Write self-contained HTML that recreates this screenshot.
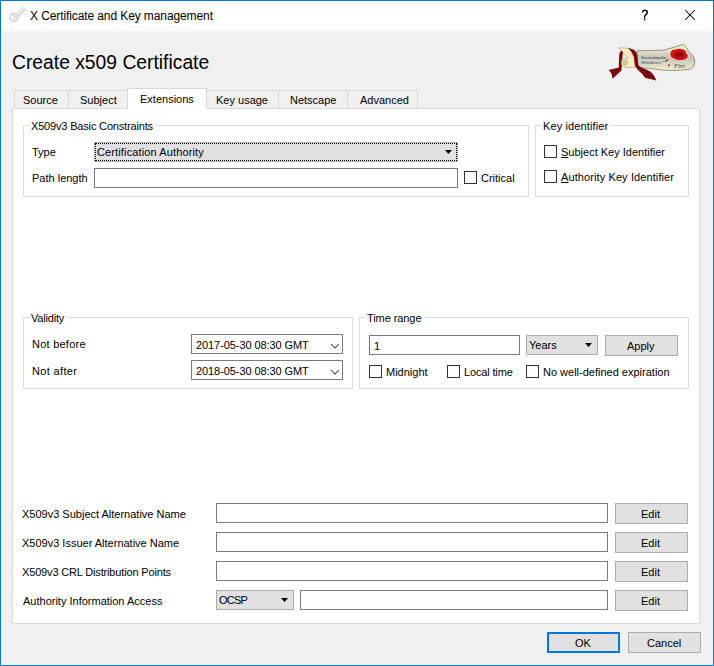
<!DOCTYPE html>
<html><head><meta charset="utf-8">
<style>
*{margin:0;padding:0;box-sizing:border-box}
html,body{width:714px;height:666px;overflow:hidden;background:#f0f0f0}
body{position:relative;font-family:"Liberation Sans",sans-serif;font-size:11px;line-height:13px;color:#000}
.a{position:absolute}
.t{position:absolute;white-space:nowrap;font-size:11px;line-height:13px}
.win{position:absolute;left:0;top:0;width:714px;height:666px;border:1px solid #0078d7;background:#f0f0f0}
.titlebar{position:absolute;left:1px;top:1px;width:712px;height:30px;background:#fff}
.tab{position:absolute;top:90px;height:18px;border:1px solid #d9d9d9;border-bottom:none;background:#f0f0f0}
.tab.sel{top:88px;height:21px;background:#fff;z-index:2}
.pane{position:absolute;left:12px;top:108px;width:688px;height:516px;background:#fff;border:1px solid #d9d9d9}
.gb{position:absolute;border:1px solid #dcdcdc}
.gbt{position:absolute;white-space:nowrap;background:#fff;padding:0 3px 0 1px;font-size:11px;line-height:13px}
.inp{position:absolute;background:#fff;border:1px solid #7a7a7a}
.cmb{position:absolute;background:#e1e1e1;border:1px solid #adadad}
.btn{position:absolute;background:#e1e1e1;border:1px solid #adadad}
.cb{position:absolute;width:13px;height:13px;border:1px solid #333;background:#fff}
.arr{position:absolute;width:0;height:0;border-left:3.5px solid transparent;border-right:3.5px solid transparent;border-top:4px solid #000}
</style></head><body>
<div class="win"></div>
<div class="titlebar"></div>
<!-- key icon -->
<svg class="a" style="left:0;top:0" width="30" height="30" viewBox="0 0 30 30">
  <path d="M16.3 12.6 L21.5 7.3 Q23 6.3 24.6 7.6 Q25.6 8.8 24.8 10.1 L18.3 16.6 Z" fill="#e9e9e9"/>
  <line x1="18.4" y1="16.4" x2="24.8" y2="10.1" stroke="#808080" stroke-width="0.8" stroke-dasharray="1 0.6"/>
  <circle cx="13.9" cy="17.5" r="4.5" fill="#e6e6e6" stroke="#c2c2c2" stroke-width="0.7"/>
  <circle cx="11.8" cy="17.4" r="1.05" fill="#ffffff"/>
</svg>
<div class="t" style="left:30px;top:9px;font-size:12px;line-height:14px;letter-spacing:-0.1px">X Certificate and Key management</div>
<!-- ? and X -->
<svg class="a" style="left:640px;top:8px" width="10" height="14" viewBox="0 0 10 14">
  <path d="M2.6 3.9 C2.9 2.8 3.9 2.3 4.9 2.3 C6.4 2.3 7.3 3.2 7.3 4.4 C7.3 5.8 6.1 6.4 5.3 7.3 C4.7 8 4.5 8.6 4.5 9.4" fill="none" stroke="#000" stroke-width="1.45" stroke-linecap="round"/>
  <circle cx="4.7" cy="11.4" r="0.95" fill="#000"/>
</svg>
<svg class="a" style="left:684px;top:9px" width="12" height="12" viewBox="0 0 12 12">
  <line x1="1.5" y1="1.5" x2="10.5" y2="10.5" stroke="#000" stroke-width="1.05" stroke-linecap="round"/>
  <line x1="10.5" y1="1.5" x2="1.5" y2="10.5" stroke="#000" stroke-width="1.05" stroke-linecap="round"/>
</svg>

<div class="t" style="left:12px;top:52px;font-size:19.3px;line-height:22px">Create x509 Certificate</div>

<!-- logo -->
<svg class="a" style="left:600px;top:40px" width="100" height="44" viewBox="0 0 100 44">
  <defs>
    <linearGradient id="pg" x1="0" y1="0" x2="0" y2="1">
      <stop offset="0" stop-color="#f4f1c4"/>
      <stop offset="0.22" stop-color="#e6e4c6"/>
      <stop offset="0.5" stop-color="#c6c6ba"/>
      <stop offset="0.78" stop-color="#d8d8c4"/>
      <stop offset="1" stop-color="#f6f3c8"/>
    </linearGradient>
  </defs>
  <path d="M37 10.8 C50 10.5 60 10.3 64 10 C70 8.5 78 6 83.5 4.3 L84.5 5.4 C86 8 90 12.5 93.2 16.2 C95 19 95.2 23 93.7 25.9 C92.5 27.8 91 29 90 29.2 C85 30 78 30.3 74.8 30.3 L64 30.3 C55 29 45 27.6 37 27.5 Z" fill="url(#pg)" stroke="#4a4a44" stroke-width="0.55"/>
  <path d="M21 10.8 C22.5 10.2 23.6 10.2 24.4 10.4 C23.4 12 22.8 13.5 22.6 15 C22.3 18 22.2 21 22 24 C21.8 26 21.6 28 21.4 30.6 C18.5 33.5 15.5 36 12.4 38.8 C12.2 36.5 11.8 34.6 11.2 33.2 C10.4 32 9.6 31 8.6 30.1 C12 29.3 15.5 28.3 18.8 27.6 C18.9 23 19 18 19.3 14.5 C19.6 12.8 20.2 11.5 21 10.8 Z" fill="#7a0a10"/>
  <path d="M19 7.7 L30 8.3 L37 27.2 L26 27.6 C23 27.2 21.2 25.5 21.2 22.5 C21.2 20 23 18.3 25.5 18.3 L28.3 18.8 Z" fill="#f5efbf" stroke="#8a8060" stroke-width="0.4"/>
  <circle cx="25" cy="22.6" r="2.3" fill="none" stroke="#9a8a5a" stroke-width="0.7"/>
  <circle cx="25.2" cy="22.8" r="0.8" fill="#9a8a5a"/>
  <path d="M27.4 8.3 C29 8.3 31 8.6 32.8 9.2 C34 9.8 35 10.6 35.8 11.6 C36.8 13.5 37.4 15.5 37.6 17 C37.8 20 38 23 38.7 25.6 C41 27.5 44 28.8 46.8 29.7 C49 30.5 51 31.8 52.2 33.2 C54 35.3 55.5 38 56.2 40.4 C52 39.5 48.5 38.5 45 37.7 C44 36.5 43 35 42.3 34.1 C40.5 32.5 39 31 37.8 29.7 C36 27.5 35 26 34.7 24.7 C34.4 22 34.2 19.5 34 17 C33 14.5 31.8 12 30.4 10.4 C29.5 9.5 28.5 8.8 27.4 8.3 Z" fill="#7a0a10"/>
  <path d="M70.5 13 C71 10 74 9 76 9.5 C78 8.5 81 8.5 83 9.5 C85 10 86 12 86 13 C88 14.5 88 17 87 18 C85 19.5 83 20 81 20 C78 20.5 75 19.5 74 18.5 C72 18 70 16 70.5 13 Z" fill="#d80f0f"/>
  <ellipse cx="79.5" cy="14.6" rx="4.6" ry="3.4" fill="#8e0a0a"/>
  <path d="M77 12.5 Q79.5 11 82 13 M76.5 16 Q79 18 82.5 16" stroke="#d02020" stroke-width="0.6" fill="none"/>
  <path d="M65.5 21.2 L67.8 19.8" stroke="#c81010" stroke-width="1.3" stroke-linecap="round"/>
  <path d="M68.6 26 L69.2 24.6" stroke="#c81010" stroke-width="1.2" stroke-linecap="round"/>
  <text x="41" y="18.6" font-size="5" font-family="Liberation Serif" font-style="italic" fill="#1a1a1a" opacity="0.85" textLength="25" lengthAdjust="spacingAndGlyphs">Ixominale</text>
  <text x="41" y="24.4" font-size="5" font-family="Liberation Serif" font-style="italic" fill="#1a1a1a" opacity="0.85" textLength="22.5" lengthAdjust="spacingAndGlyphs">Windows"</text>
  <text x="74" y="27.6" font-size="5.5" font-family="Liberation Serif" font-style="italic" fill="#1a1a1a" opacity="0.85" textLength="11" lengthAdjust="spacingAndGlyphs">Fire</text>
</svg>

<!-- tabs -->
<div class="pane"></div>
<div class="tab" style="left:14px;width:55px"></div>
<div class="tab" style="left:68px;width:60px"></div>
<div class="tab sel" style="left:127px;width:80px"></div>
<div class="tab" style="left:206px;width:73px"></div>
<div class="tab" style="left:278px;width:70px"></div>
<div class="tab" style="left:347px;width:71px"></div>
<div class="t" style="left:23px;top:94px;z-index:3">Source</div>
<div class="t" style="left:80px;top:94px;z-index:3">Subject</div>
<div class="t" style="left:140px;top:93px;z-index:3">Extensions</div>
<div class="t" style="left:216px;top:94px;z-index:3">Key usage</div>
<div class="t" style="left:290px;top:94px;z-index:3">Netscape</div>
<div class="t" style="left:360px;top:94px;z-index:3">Advanced</div>

<!-- Basic constraints -->
<div class="gb" style="left:23px;top:125px;width:506px;height:72px"></div>
<div class="gbt" style="left:30px;top:120px;letter-spacing:-0.17px">X509v3 Basic Constraints</div>
<div class="t" style="left:32px;top:146px">Type</div>
<div class="cmb" style="left:94px;top:142px;width:364px;height:20px"><div class="a" style="left:0;top:0;right:0;bottom:0;border:1px dotted #000"></div></div>
<div class="t" style="left:97px;top:146px;letter-spacing:0.13px">Certification Authority</div>
<svg class="a" style="left:445px;top:150px" width="8" height="5"><path d="M0 0 H7 L3.5 4 Z" fill="#000"/></svg>
<div class="t" style="left:32px;top:172px">Path length</div>
<div class="inp" style="left:94px;top:168px;width:364px;height:20px"></div>
<div class="cb" style="left:464px;top:171px"></div>
<div class="t" style="left:481px;top:172px">Critical</div>

<!-- Key identifier -->
<div class="gb" style="left:535px;top:125px;width:154px;height:72px"></div>
<div class="gbt" style="left:542px;top:120px;letter-spacing:0.12px">Key identifier</div>
<div class="cb" style="left:544px;top:145px"></div>
<div class="t" style="left:561px;top:146px"><u>S</u>ubject Key Identifier</div>
<div class="cb" style="left:544px;top:170px"></div>
<div class="t" style="left:561px;top:171px;letter-spacing:0.1px"><u>A</u>uthority Key Identifier</div>

<!-- Validity -->
<div class="gb" style="left:23px;top:317px;width:330px;height:72px"></div>
<div class="gbt" style="left:30px;top:312px;letter-spacing:-0.2px">Validity</div>
<div class="t" style="left:32px;top:338px;letter-spacing:0.24px">Not before</div>
<div class="t" style="left:32px;top:365px;letter-spacing:0.35px">Not after</div>
<div class="inp" style="left:191px;top:334px;width:152px;height:20px"></div>
<div class="t" style="left:196px;top:339px;letter-spacing:-0.08px">2017-05-30 08:30 GMT</div>
<svg class="a" style="left:329.5px;top:342.5px" width="11" height="7"><path d="M1 1 L5 5 L9 1" fill="none" stroke="#3a3a3a" stroke-width="1.05"/></svg>
<div class="inp" style="left:191px;top:360px;width:152px;height:20px"></div>
<div class="t" style="left:196px;top:365px;letter-spacing:-0.08px">2018-05-30 08:30 GMT</div>
<svg class="a" style="left:329.5px;top:368.5px" width="11" height="7"><path d="M1 1 L5 5 L9 1" fill="none" stroke="#3a3a3a" stroke-width="1.05"/></svg>

<!-- Time range -->
<div class="gb" style="left:359px;top:317px;width:330px;height:72px"></div>
<div class="gbt" style="left:366px;top:312px;letter-spacing:-0.08px">Time range</div>
<div class="inp" style="left:369px;top:335px;width:151px;height:20px"></div>
<div class="t" style="left:374px;top:340px">1</div>
<div class="cmb" style="left:526px;top:335px;width:72px;height:20px"></div>
<div class="t" style="left:529px;top:339px">Years</div>
<svg class="a" style="left:585px;top:343px" width="8" height="5"><path d="M0 0 H7 L3.5 4 Z" fill="#000"/></svg>
<div class="btn" style="left:605px;top:335px;width:73px;height:21px"></div>
<div class="t" style="left:627px;top:340px">Apply</div>
<div class="cb" style="left:369px;top:365px"></div>
<div class="t" style="left:386px;top:366px">Midnight</div>
<div class="cb" style="left:447px;top:365px"></div>
<div class="t" style="left:464px;top:366px;letter-spacing:-0.15px">Local time</div>
<div class="cb" style="left:526px;top:365px"></div>
<div class="t" style="left:543px;top:366px">No well-defined expiration</div>

<!-- bottom rows -->
<div class="t" style="left:22px;top:508px">X509v3 Subject Alternative Name</div>
<div class="inp" style="left:216px;top:503px;width:392px;height:20px"></div>
<div class="btn" style="left:615px;top:503px;width:73px;height:21px"></div>
<div class="t" style="left:641px;top:508px">Edit</div>

<div class="t" style="left:22px;top:537px">X509v3 Issuer Alternative Name</div>
<div class="inp" style="left:216px;top:532px;width:392px;height:20px"></div>
<div class="btn" style="left:615px;top:532px;width:73px;height:21px"></div>
<div class="t" style="left:641px;top:537px">Edit</div>

<div class="t" style="left:22px;top:566px;letter-spacing:-0.16px">X509v3 CRL Distribution Points</div>
<div class="inp" style="left:216px;top:561px;width:392px;height:20px"></div>
<div class="btn" style="left:615px;top:561px;width:73px;height:21px"></div>
<div class="t" style="left:641px;top:566px">Edit</div>

<div class="t" style="left:23px;top:595px">Authority Information Access</div>
<div class="cmb" style="left:216px;top:590px;width:78px;height:20px"></div>
<div class="t" style="left:219px;top:594px;letter-spacing:-0.8px">OCSP</div>
<svg class="a" style="left:281px;top:598px" width="8" height="5"><path d="M0 0 H7 L3.5 4 Z" fill="#000"/></svg>
<div class="inp" style="left:300px;top:590px;width:308px;height:20px"></div>
<div class="btn" style="left:615px;top:590px;width:73px;height:21px"></div>
<div class="t" style="left:641px;top:595px">Edit</div>

<!-- OK / Cancel -->
<div class="btn" style="left:547px;top:632px;width:73px;height:21px;border:2px solid #0078d7"></div>
<div class="t" style="left:575px;top:637px">OK</div>
<div class="btn" style="left:628px;top:632px;width:73px;height:21px"></div>
<div class="t" style="left:647px;top:637px">Cancel</div>
</body></html>
